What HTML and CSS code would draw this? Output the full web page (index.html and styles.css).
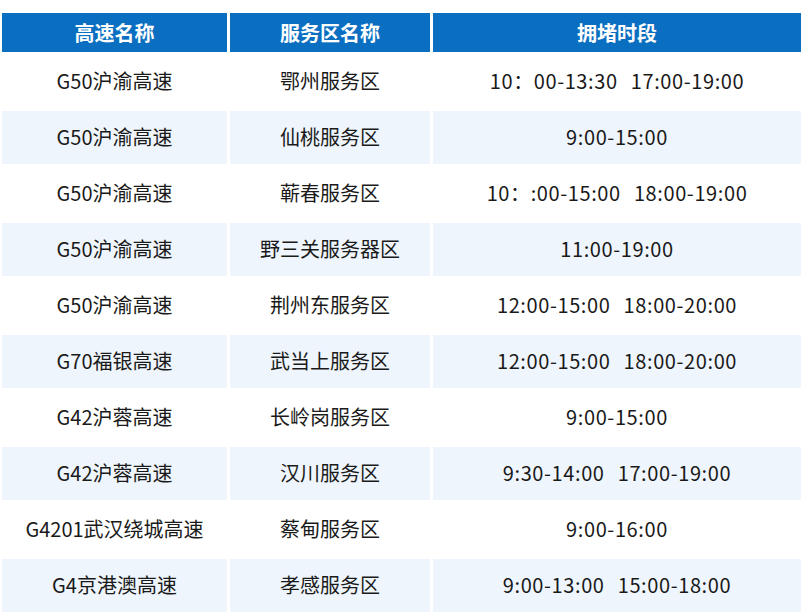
FILE: index.html
```html
<!DOCTYPE html>
<html lang="zh">
<head>
<meta charset="utf-8">
<link rel="stylesheet" href="styles.css">
</head>
<body>
<div class="sheet">
  <div class="grid">
    <div class="hd">高速名称</div><div class="hd">服务区名称</div><div class="hd">拥堵时段</div>
    <div class="c">G50沪渝高速</div><div class="c">鄂州服务区</div><div class="c t">10：00-13:30&nbsp;&nbsp;17:00-19:00</div>
    <div class="c alt">G50沪渝高速</div><div class="c alt">仙桃服务区</div><div class="c t alt">9:00-15:00</div>
    <div class="c">G50沪渝高速</div><div class="c">蕲春服务区</div><div class="c t">10：:00-15:00&nbsp;&nbsp;18:00-19:00</div>
    <div class="c alt">G50沪渝高速</div><div class="c alt">野三关服务器区</div><div class="c t alt">11:00-19:00</div>
    <div class="c">G50沪渝高速</div><div class="c">荆州东服务区</div><div class="c t">12:00-15:00&nbsp;&nbsp;18:00-20:00</div>
    <div class="c alt">G70福银高速</div><div class="c alt">武当上服务区</div><div class="c t alt">12:00-15:00&nbsp;&nbsp;18:00-20:00</div>
    <div class="c">G42沪蓉高速</div><div class="c">长岭岗服务区</div><div class="c t">9:00-15:00</div>
    <div class="c alt">G42沪蓉高速</div><div class="c alt">汉川服务区</div><div class="c t alt">9:30-14:00&nbsp;&nbsp;17:00-19:00</div>
    <div class="c">G4201武汉绕城高速</div><div class="c">蔡甸服务区</div><div class="c t">9:00-16:00</div>
    <div class="c alt">G4京港澳高速</div><div class="c alt">孝感服务区</div><div class="c t alt">9:00-13:00&nbsp;&nbsp;15:00-18:00</div>
  </div>
</div>
</body>
</html>
```
FILE: styles.css
```css
html, body {
  margin: 0;
  padding: 0;
  background: #ffffff;
}
.sheet {
  width: 803px;
  height: 614px;
  padding: 13px 0 0 2px;
  box-sizing: border-box;
  font-family: "Noto Sans CJK SC", "Noto Sans", sans-serif;
}
.grid {
  display: grid;
  grid-template-columns: 225px 200px 368px;
  grid-template-rows: 39px repeat(10, 53px);
  column-gap: 3px;
  row-gap: 3px;
}
.hd {
  background: #0b6fc1;
  color: #ffffff;
  font-weight: bold;
  font-size: 20px;
  display: flex;
  align-items: center;
  justify-content: center;
}
.c {
  display: flex;
  align-items: center;
  justify-content: center;
  font-size: 20px;
  color: #1a1a1a;
  white-space: nowrap;
  background: #ffffff;
  padding-bottom: 2px;
}
.t {
  letter-spacing: 0.6px;
  word-spacing: 1.5px;
}
.alt {
  background: #eff5fc;
}
```
